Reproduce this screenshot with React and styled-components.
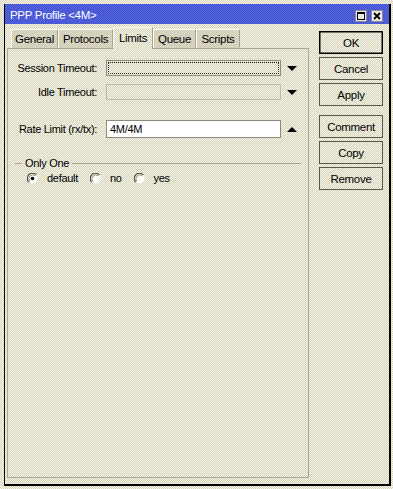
import React from 'react';
import styled, { createGlobalStyle, css } from 'styled-components';

// 1px checker dither, like the old 16-colour window theme
const dither = (a, b) => css`
  background: repeating-conic-gradient(${a} 0 25%, ${b} 0 50%) 0 0 / 2px 2px;
`;

const GlobalStyle = createGlobalStyle`
  html, body { margin: 0; padding: 0; }
  body {
    width: 393px;
    height: 489px;
    overflow: hidden;
    ${dither('#d6d2b8', '#f6f5ec')}
    font-family: "Liberation Sans", Arial, sans-serif;
    font-size: 11px;
    letter-spacing: -0.3px;
    color: #000;
  }
`;

const Window = styled.div`
  box-sizing: border-box;
  margin: 4px 0 0 4px;
  width: 387px;
  height: 482px;
  border-left: 1px solid #000;
  border-right: 2px solid #000;
  border-bottom: 2px solid #000;
  display: flex;
  flex-direction: column;
`;

const TitleBar = styled.div`
  height: 20px;
  flex: none;
  display: flex;
  align-items: center;
  padding: 0 6px 0 5px;
  ${dither('#4252d2', '#5364dc')}
  color: #fff;
  font-size: 11.5px;
`;

const Title = styled.div`
  flex: 1;
  padding-top: 2px;
`;

const TitleButton = styled.div`
  box-sizing: border-box;
  width: 12px;
  height: 12px;
  margin-left: 4px;
  margin-top: 3px;
  background: #ecebe4;
  border: 1px solid #8c8c8c;
  display: flex;
  align-items: center;
  justify-content: center;
`;

const Body = styled.div`
  flex: 1;
  display: flex;
  padding: 3px 0 6px 2px;
`;

const LeftColumn = styled.div`
  width: 302px;
  display: flex;
  flex-direction: column;
`;

const TabRow = styled.div`
  height: 21px;
  display: flex;
  align-items: flex-end;
  padding-left: 4px;
`;

const Tab = styled.div`
  box-sizing: border-box;
  width: ${p => p.w}px;
  height: ${p => (p.active ? 22 : 19)}px;
  display: flex;
  align-items: center;
  justify-content: center;
  border: 1px solid;
  border-color: #fbfaf4 #a6a28e transparent #fbfaf4;
  ${p => (p.active ? dither('#d6d2b8', '#f6f5ec') : dither('#ccc8b2', '#dedbca'))}
  margin-bottom: ${p => (p.active ? -1 : 0)}px;
  position: relative;
  z-index: ${p => (p.active ? 2 : 1)};
  font-size: 11.5px;
`;

const Panel = styled.div`
  flex: 1;
  border: 1px solid #aaa692;
  padding: 11px 0 0 0;
`;

const Row = styled.div`
  display: flex;
  align-items: center;
  height: ${p => p.h || 16}px;
  margin-top: ${p => p.gap || 0}px;
`;

const Label = styled.div`
  width: 89px;
  margin-right: 9px;
  text-align: right;
  white-space: nowrap;
`;

const Field = styled.div`
  box-sizing: border-box;
  width: 175px;
  height: 100%;
  position: relative;
  display: flex;
  align-items: center;
  padding-left: 3px;
  border: 1px solid ${p => (p.disabled ? '#bdbaa6' : '#8c8a7a')};
  background: ${p => (p.white ? '#fff' : 'transparent')};

  ${p =>
    p.focused &&
    css`
      &::after {
        content: '';
        position: absolute;
        inset: 1px;
        border: 1px dotted #222;
      }
    `}
`;

const ArrowBox = styled.div`
  width: 10px;
  margin-left: 6px;
  display: flex;
  align-items: center;
`;

const Group = styled.div`
  margin-top: 19px;
  display: flex;
  align-items: center;
  height: 12px;
  padding-left: 7px;
  padding-right: 7px;
`;

const GroupLine = styled.div`
  height: 1px;
  background: #aaa692;
  width: ${p => (p.w ? `${p.w}px` : 'auto')};
  flex: ${p => (p.w ? 'none' : 1)};
`;

const GroupTitle = styled.div`
  padding: 0 3px;
`;

const RadioRow = styled.div`
  display: flex;
  align-items: center;
  gap: 12px;
  margin-top: 3px;
  padding-left: 19px;
`;

const RadioItem = styled.label`
  display: flex;
  align-items: center;
  gap: 9px;
`;

const RightColumn = styled.div`
  width: 64px;
  margin-left: 10px;
  padding-top: 4px;
  display: flex;
  flex-direction: column;
  gap: 3px;
`;

const Button = styled.div`
  box-sizing: border-box;
  height: 23px;
  display: flex;
  align-items: center;
  justify-content: center;
  border: 1px solid ${p => (p.primary ? '#000' : '#55554c')};
  box-shadow: ${p => (p.primary ? 'inset 0 0 0 0.5px #000' : 'none')};
  margin-top: ${p => p.gap || 0}px;
  font-size: 11.5px;
`;

const Arrow = ({ up }) => (
  <svg width="10" height="5" viewBox="0 0 10 5">
    <path d={up ? 'M0 5 L5 0 L10 5 Z' : 'M0 0 L10 0 L5 5 Z'} fill="#000" />
  </svg>
);

const Radio = ({ checked }) => (
  <svg width="11" height="11" viewBox="0 0 11 11">
    <circle cx="5.5" cy="5.5" r="5" fill="#fcfcf8" />
    <path d="M9.2 1.8 A5 5 0 0 0 1.8 9.2" stroke="#4a4a40" strokeWidth="1.2" fill="none" />
    <path d="M8.3 2.7 A4 4 0 0 0 2.7 8.3" stroke="#8c8a7a" strokeWidth="1" fill="none" />
    {checked && <circle cx="5.5" cy="5.5" r="1.8" fill="#000" />}
  </svg>
);

const tabs = [
  { name: 'General', w: 47 },
  { name: 'Protocols', w: 55 },
  { name: 'Limits', w: 40 },
  { name: 'Queue', w: 43 },
  { name: 'Scripts', w: 44 },
];

const buttons = [
  { name: 'OK', primary: true },
  { name: 'Cancel' },
  { name: 'Apply' },
  { name: 'Comment', gap: 6 },
  { name: 'Copy' },
  { name: 'Remove' },
];

export default function App() {
  return (
    <>
      <GlobalStyle />
      <Window>
        <TitleBar>
          <Title>PPP Profile &lt;4M&gt;</Title>
          <TitleButton>
            <svg width="8" height="8" viewBox="0 0 8 8">
              <rect x="0.5" y="0.5" width="7" height="7" fill="none" stroke="#000" />
              <rect x="0" y="0" width="8" height="2" fill="#000" />
            </svg>
          </TitleButton>
          <TitleButton>
            <svg width="8" height="8" viewBox="0 0 8 8">
              <path d="M1 1 L7 7 M7 1 L1 7" stroke="#000" strokeWidth="1.8" />
            </svg>
          </TitleButton>
        </TitleBar>
        <Body>
          <LeftColumn>
            <TabRow>
              {tabs.map(t => (
                <Tab key={t.name} w={t.w} active={t.name === 'Limits'}>
                  {t.name}
                </Tab>
              ))}
            </TabRow>
            <Panel>
              <Row>
                <Label>Session Timeout:</Label>
                <Field focused />
                <ArrowBox>
                  <Arrow />
                </ArrowBox>
              </Row>
              <Row gap={8}>
                <Label>Idle Timeout:</Label>
                <Field disabled />
                <ArrowBox>
                  <Arrow />
                </ArrowBox>
              </Row>
              <Row gap={20} h={18}>
                <Label>Rate Limit (rx/tx):</Label>
                <Field white>4M/4M</Field>
                <ArrowBox>
                  <Arrow up />
                </ArrowBox>
              </Row>
              <Group>
                <GroupLine w={7} />
                <GroupTitle>Only One</GroupTitle>
                <GroupLine />
              </Group>
              <RadioRow>
                <RadioItem>
                  <Radio checked />
                  default
                </RadioItem>
                <RadioItem>
                  <Radio />
                  no
                </RadioItem>
                <RadioItem>
                  <Radio />
                  yes
                </RadioItem>
              </RadioRow>
            </Panel>
          </LeftColumn>
          <RightColumn>
            {buttons.map(b => (
              <Button key={b.name} primary={b.primary} gap={b.gap}>
                {b.name}
              </Button>
            ))}
          </RightColumn>
        </Body>
      </Window>
    </>
  );
}
